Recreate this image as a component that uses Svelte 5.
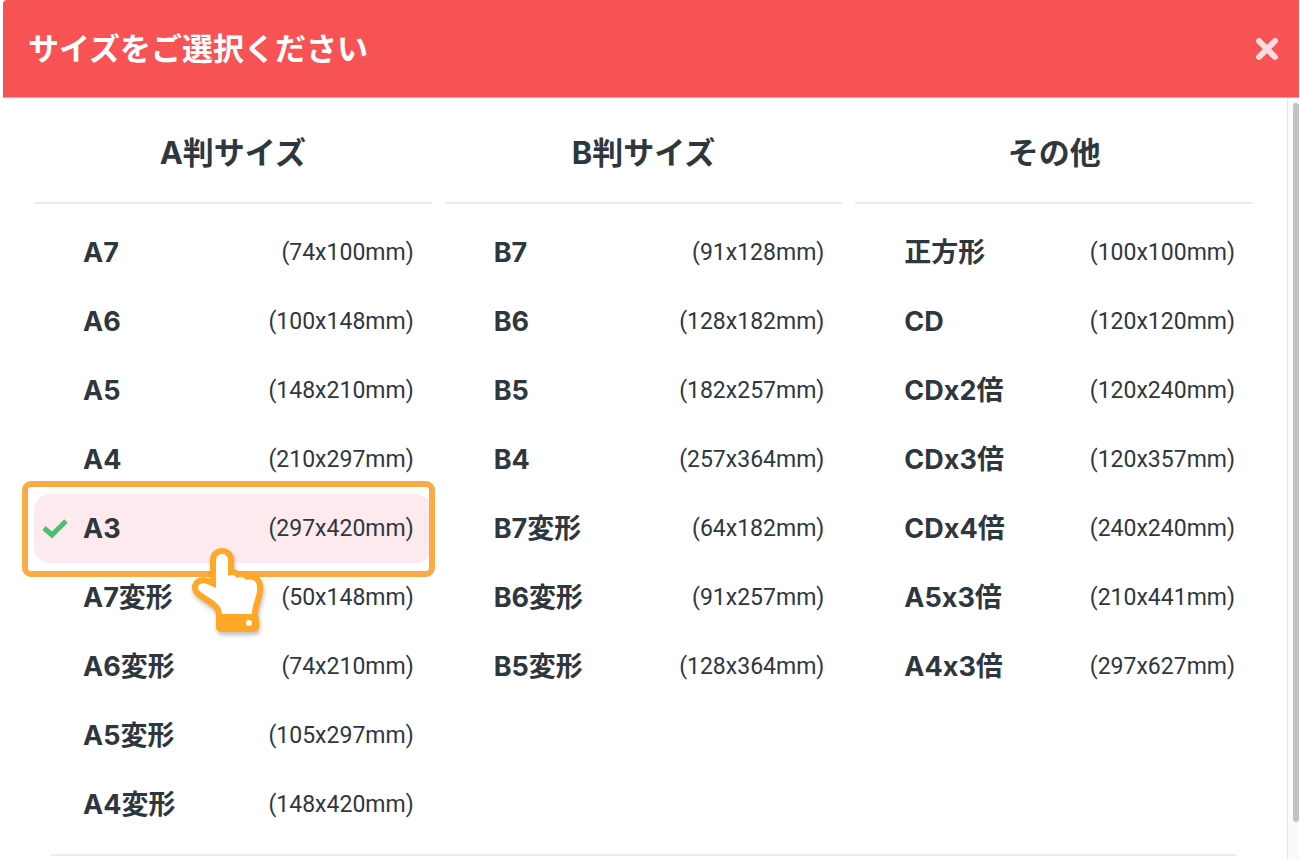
<script lang="ts">
  type Size = { name: string; dimensions: string }

  const groups: { title: string; sizes: Size[] }[] = [
    {
      title: 'A判サイズ',
      sizes: [
        { name: 'A7', dimensions: '74x100mm' },
        { name: 'A6', dimensions: '100x148mm' },
        { name: 'A5', dimensions: '148x210mm' },
        { name: 'A4', dimensions: '210x297mm' },
        { name: 'A3', dimensions: '297x420mm' },
        { name: 'A7変形', dimensions: '50x148mm' },
        { name: 'A6変形', dimensions: '74x210mm' },
        { name: 'A5変形', dimensions: '105x297mm' },
        { name: 'A4変形', dimensions: '148x420mm' },
      ],
    },
    {
      title: 'B判サイズ',
      sizes: [
        { name: 'B7', dimensions: '91x128mm' },
        { name: 'B6', dimensions: '128x182mm' },
        { name: 'B5', dimensions: '182x257mm' },
        { name: 'B4', dimensions: '257x364mm' },
        { name: 'B7変形', dimensions: '64x182mm' },
        { name: 'B6変形', dimensions: '91x257mm' },
        { name: 'B5変形', dimensions: '128x364mm' },
      ],
    },
    {
      title: 'その他',
      sizes: [
        { name: '正方形', dimensions: '100x100mm' },
        { name: 'CD', dimensions: '120x120mm' },
        { name: 'CDx2倍', dimensions: '120x240mm' },
        { name: 'CDx3倍', dimensions: '120x357mm' },
        { name: 'CDx4倍', dimensions: '240x240mm' },
        { name: 'A5x3倍', dimensions: '210x441mm' },
        { name: 'A4x3倍', dimensions: '297x627mm' },
      ],
    },
  ]

  let selected = $state('A3')
  let open = $state(true)
</script>

{#if open}
  <div class="modal" role="dialog" aria-labelledby="modal-title">
    <header>
      <h1 id="modal-title">サイズをご選択ください</h1>
      <button class="close" aria-label="閉じる" onclick={() => (open = false)}>
        <svg viewBox="0 0 24 24" width="24" height="24">
          <path d="M4 4 L20 20 M20 4 L4 20" />
        </svg>
      </button>
    </header>

    <div class="body">
      <main>
        <div class="groups">
          {#each groups as group}
            <section>
              <h2>{group.title}</h2>
              <div class="sizes">
                {#each group.sizes as size}
                  <label class="size" class:selected={selected === size.name}>
                    <input type="radio" name="size" value={size.name} bind:group={selected} />
                    <span class="mark">
                      {#if selected === size.name}
                        <svg viewBox="0 0 26 20" width="26" height="20">
                          <path d="M2 9 L10 16 L24 2" />
                        </svg>
                      {/if}
                    </span>
                    <span class="name">{size.name}</span>
                    <span class="dimensions">({size.dimensions})</span>
                    {#if selected === size.name}
                      <span class="frame"></span>
                      <svg class="hand" viewBox="0 0 76 88" width="76" height="88">
                        <path
                          class="outline"
                          d="M26 41 V13 C26 5 38 5 38 13 V29 C41 27 45 28 47 31 C50 29 54 30 56 33 C65 31 68 36 67 44 C66 52 62 58 62 68 H32 C32 57 22 53 12 46 C4 41 9 34 17 37 Z" />
                        <rect class="cuff" x="26" y="67" width="43" height="18" rx="5" />
                        <path
                          class="palm"
                          d="M26 41 V13 C26 5 38 5 38 13 V29 C41 27 45 28 47 31 C50 29 54 30 56 33 C65 31 68 36 67 44 C66 52 62 58 62 67 H32 C32 57 22 53 12 46 C4 41 9 34 17 37 Z" />
                        <circle class="palm" cx="59" cy="76" r="3" />
                      </svg>
                    {/if}
                  </label>
                {/each}
              </div>
            </section>
          {/each}
        </div>
        <hr />
      </main>
      <div class="track"><div class="thumb"></div></div>
    </div>
  </div>
{/if}

<style>
  :global(body) {
    margin: 0;
    background: #fff;
  }

  .modal {
    display: flex;
    flex-direction: column;
    box-sizing: border-box;
    min-height: 100vh;
    padding: 0 1px 0 3px;
    color: #2f373e;
    font-family: Inter, 'Noto Sans CJK JP', sans-serif;
    /* keeps the x between digits a plain letter */
    font-feature-settings: 'calt' 0;
  }

  header {
    display: flex;
    align-items: center;
    justify-content: space-between;
    box-sizing: border-box;
    height: 98px;
    padding: 0 20px 0 25px;
    border-bottom: 1px solid #e5a5a8;
    border-radius: 4px 0 0 0;
    background: #f75355;
  }

  h1,
  h2 {
    margin: 0;
    font-size: 31px;
    line-height: 48px;
    font-weight: 700;
  }

  h1 {
    color: #fff;
  }

  .close {
    display: flex;
    padding: 0;
    border: 0;
    background: none;
    cursor: pointer;
  }

  .close path {
    fill: none;
    stroke: #fddcde;
    stroke-width: 6;
    stroke-linecap: round;
  }

  .body {
    display: flex;
    flex: 1;
  }

  main {
    flex: 1;
    padding: 0 34px 0 31px;
  }

  .groups {
    display: grid;
    grid-template-columns: repeat(3, 1fr);
    gap: 13px;
  }

  h2 {
    padding: 31px 0 25px;
    border-bottom: 2px solid #ebecec;
    text-align: center;
  }

  .sizes {
    padding-top: 14px;
  }

  .size {
    position: relative;
    display: flex;
    align-items: center;
    height: 69px;
    padding: 0 18px 0 8px;
    border-radius: 16px;
    cursor: pointer;
  }

  .size.selected {
    background: #fdeaee;
  }

  .size input {
    position: absolute;
    opacity: 0;
  }

  .mark {
    display: flex;
    width: 41px;
  }

  .mark path {
    fill: none;
    stroke: #4bbf73;
    stroke-width: 5;
  }

  .name {
    flex: 1;
    font-size: 27px;
    line-height: 40px;
    font-weight: 700;
  }

  .dimensions {
    font-family: Roboto, sans-serif;
    font-size: 23px;
    line-height: 40px;
  }

  .frame {
    position: absolute;
    inset: -13px -3px -14px -12px;
    border: 6px solid #f9ab45;
    border-radius: 9px;
  }

  .hand {
    position: absolute;
    z-index: 1;
    top: 53px;
    left: 156px;
    filter: drop-shadow(1px 3px 2px rgba(0, 0, 0, 0.25));
    overflow: visible;
  }

  .outline {
    fill: #ffa726;
    stroke: #ffa726;
    stroke-width: 12;
    stroke-linejoin: round;
  }

  .cuff {
    fill: #ffa726;
  }

  .palm {
    fill: #fff;
  }

  hr {
    margin: 15px 17px 0;
    border: 0;
    border-top: 2px solid #ebecec;
  }

  .track {
    box-sizing: border-box;
    width: 12px;
    padding: 5px 0 0 5px;
    border-left: 1px solid #e8e8e8;
    background: #fafafa;
  }

  .thumb {
    height: 95%;
    border-radius: 4px;
    background: #c1c3c3;
  }
</style>
